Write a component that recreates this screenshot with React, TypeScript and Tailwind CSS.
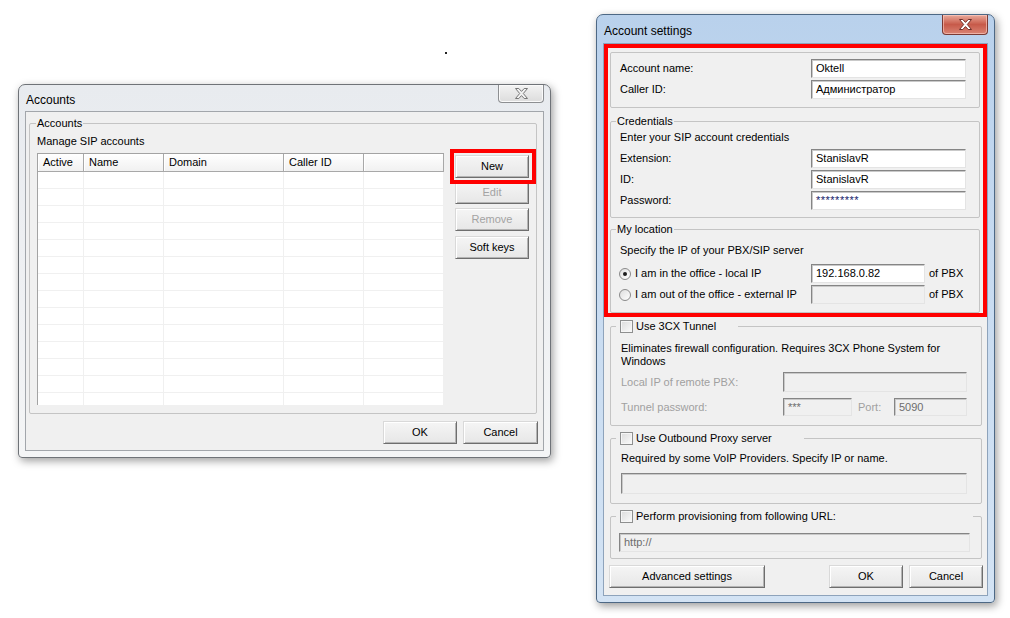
import React from 'react';

type P = { children?: React.ReactNode; className?: string };

function Btn({ children, className = '', disabled = false }: P & { disabled?: boolean }) {
  return (
    <div
      className={`flex items-center justify-center h-[23px] border border-t-[#d9d9d9] border-l-[#d9d9d9] border-r-[#6e6e6e] border-b-[#6e6e6e] bg-linear-to-b from-[#f5f5f5] to-[#e7e7e7] shadow-[inset_1px_1px_0_#ffffff,inset_-1px_-1px_0_#b4b4b4] ${disabled ? 'text-[#a3a3a3]' : 'text-black'} ${className}`}
    >
      {children}
    </div>
  );
}

function Input({ children, className = '', disabled = false }: P & { disabled?: boolean }) {
  return (
    <div
      className={`flex items-center pl-[4px] border border-t-[#858585] border-l-[#858585] border-r-[#e4e4e4] border-b-[#e4e4e4] shadow-[inset_1px_1px_0_#c9c9c9] whitespace-nowrap overflow-hidden ${disabled ? 'bg-[#f0f0f0] text-[#6d6d6d]' : 'bg-white text-black'} ${className}`}
    >
      {children}
    </div>
  );
}

function Check() {
  return (
    <span className="inline-block w-[13px] h-[13px] border border-[#8e8f8f] bg-linear-to-br from-[#dcdcdc] to-[#fbfbfb] shadow-[inset_0_0_0_1px_#f6f6f6] shrink-0" />
  );
}

function Radio({ checked = false }: { checked?: boolean }) {
  return (
    <span className="flex items-center justify-center w-[12px] h-[12px] rounded-full border border-[#8a8a8a] bg-linear-to-br from-[#dedede] to-[#ffffff] shrink-0">
      {checked && <span className="w-[4px] h-[4px] rounded-full bg-[#1c1c1c]" />}
    </span>
  );
}

function XIcon({ fill, stroke }: { fill: string; stroke: string }) {
  return (
    <svg width="13" height="11" viewBox="0 0 13 11">
      <polygon
        points="0.5,0.5 3.8,0.5 6.5,3.4 9.2,0.5 12.5,0.5 8.3,5.5 12.5,10.5 9.2,10.5 6.5,7.6 3.8,10.5 0.5,10.5 4.7,5.5"
        fill={fill}
        stroke={stroke}
        strokeWidth="1"
        strokeLinejoin="round"
      />
    </svg>
  );
}

const cols = [46, 80, 120, 80, 80];
const heads = ['Active', 'Name', 'Domain', 'Caller ID', ''];

function AccountsWindow() {
  return (
    <div className="absolute left-[18px] top-[84px] w-[533px] h-[374px] flex flex-col rounded-t-[7px] rounded-b-[4px] border border-[#6f7378] bg-linear-to-b from-[#e8ebef] to-[#f4f5f6] shadow-[2px_3px_8px_rgba(0,0,0,0.38)] px-[6px] pb-[6px]">
      <div className="flex justify-between items-start h-[26px] shrink-0">
        <span className="pt-[8px] pl-[1px] text-[12px] leading-[14px] text-black">Accounts</span>
        <div className="flex items-center justify-center w-[46px] h-[18px] rounded-b-[4px] border border-t-0 border-[#8d8f92] bg-linear-to-b from-[#f3f3f3] to-[#dcdcdc] shadow-[inset_0_0_0_1px_#fafafa]">
          <XIcon fill="#f2f2f2" stroke="#767676" />
        </div>
      </div>
      <div className="flex-1 flex flex-col border border-[#a2a6ab] bg-[#f0f0f0]">
        <fieldset className="ml-[3px] mr-[6px] mt-[5px] border border-[#c4c4c4] rounded-[2px]">
          <legend className="ml-[6px] px-[1px] leading-[13px]">Accounts</legend>
          <div className="pl-[7px] pb-[8px]">
            <div className="pt-[5px] leading-[13px]">Manage SIP accounts</div>
            <div className="flex mt-[5px]">
              <div className="w-[407px] h-[252px] bg-white border-l border-t border-[#a3a3a3] overflow-hidden">
                <div className="flex h-[18px]">
                  {heads.map((h, i) => (
                    <div
                      key={i}
                      style={{ width: cols[i] }}
                      className="flex items-center pl-[5px] bg-linear-to-b from-[#ffffff] to-[#f1f1f1] border-r border-b border-[#a8a8a8] shadow-[inset_1px_1px_0_#ffffff]"
                    >
                      {h}
                    </div>
                  ))}
                </div>
                {Array.from({ length: 14 }).map((_, r) => (
                  <div key={r} className="flex h-[17px] border-b border-[#f0f0f0]">
                    {cols.map((w, i) => (
                      <div key={i} style={{ width: w }} className="border-r border-[#f0f0f0]" />
                    ))}
                  </div>
                ))}
              </div>
              <div className="ml-[11px] pt-[2px] flex flex-col w-[74px]">
                <div className="relative">
                  <Btn>New</Btn>
                  <span className="absolute left-[-5px] top-[-6px] right-[-7px] bottom-[-6px] border-4 border-[#ff0000]" />
                </div>
                <Btn disabled className="mt-[3px]">Edit</Btn>
                <Btn disabled className="mt-[4px]">Remove</Btn>
                <Btn className="mt-[5px]">Soft keys</Btn>
              </div>
            </div>
          </div>
        </fieldset>
        <div className="flex justify-end gap-[6px] pr-[5px] mt-[7px]">
          <Btn className="w-[74px]">OK</Btn>
          <Btn className="w-[75px]">Cancel</Btn>
        </div>
      </div>
    </div>
  );
}

function Row({ label, children }: { label: string; children: React.ReactNode }) {
  return (
    <div className="flex items-center justify-between h-[19px]">
      <span>{label}</span>
      {children}
    </div>
  );
}

function SettingsWindow() {
  return (
    <div className="absolute left-[596px] top-[14px] w-[399px] h-[589px] flex flex-col rounded-t-[7px] rounded-b-[4px] border border-[#4d6885] bg-linear-to-b from-[#b9d1ec] via-[#c9dcf1] to-[#d3e3f4] shadow-[2px_3px_8px_rgba(0,0,0,0.4)] px-[6px] pb-[6px]">
      <div className="flex justify-between items-start h-[28px] shrink-0">
        <span className="pt-[9px] pl-[1px] text-[12px] leading-[14px] text-black">Account settings</span>
        <div className="flex items-center justify-center w-[46px] h-[20px] rounded-b-[4px] border border-t-0 border-[#7a3a34] bg-linear-to-b from-[#e9a99b] via-[#c75a4a] to-[#d98373] shadow-[inset_0_0_0_1px_rgba(255,210,200,0.6)]">
          <XIcon fill="#ffffff" stroke="#6e2e28" />
        </div>
      </div>
      <div className="flex-1 flex flex-col border border-[#8ea3bb] bg-[#f0f0f0]">
        {/* highlighted block */}
        <div className="border-4 border-[#ff0000] pl-[2px] pr-[3px] pt-[4px]">
          <div className="h-[56px] border border-[#c4c4c4] rounded-[2px] pt-[6px] pl-[9px] pr-[13px] flex flex-col gap-[2px]">
            <Row label="Account name:">
              <Input className="w-[155px] h-[19px]">Oktell</Input>
            </Row>
            <Row label="Caller ID:">
              <Input className="w-[155px] h-[19px]">Администратор</Input>
            </Row>
          </div>
          <fieldset className="mt-[7px] border border-[#c4c4c4] rounded-[2px]">
            <legend className="ml-[5px] px-[1px] leading-[13px]">Credentials</legend>
            <div className="pl-[9px] pr-[13px] pb-[7px]">
              <div className="pt-[3px] leading-[13px]">Enter your SIP account credentials</div>
              <div className="mt-[5px] flex flex-col gap-[2px]">
                <Row label="Extension:">
                  <Input className="w-[155px] h-[19px]">StanislavR</Input>
                </Row>
                <Row label="ID:">
                  <Input className="w-[155px] h-[19px]">StanislavR</Input>
                </Row>
                <Row label="Password:">
                  <Input className="w-[155px] h-[19px]">
                    <span className="text-[#14206a] tracking-[0.5px]">*********</span>
                  </Input>
                </Row>
              </div>
            </div>
          </fieldset>
          <fieldset className="mt-[5px] border border-[#c4c4c4] rounded-[2px]">
            <legend className="ml-[5px] px-[1px] leading-[13px]">My location</legend>
            <div className="pl-[8px] pb-[8px]">
              <div className="pt-[8px] pl-[1px] leading-[13px]">Specify the IP of your PBX/SIP server</div>
              <div className="mt-[7px] flex flex-col gap-[2px]">
                <div className="flex items-center h-[19px]">
                  <div className="w-[192px] flex items-center">
                    <Radio checked />
                    <span className="ml-[4px]">I am in the office - local IP</span>
                  </div>
                  <Input className="w-[114px] h-[19px]">192.168.0.82</Input>
                  <span className="ml-[4px]">of PBX</span>
                </div>
                <div className="flex items-center h-[19px]">
                  <div className="w-[192px] flex items-center">
                    <Radio />
                    <span className="ml-[4px]">I am out of the office - external IP</span>
                  </div>
                  <Input disabled className="w-[114px] h-[19px]" />
                  <span className="ml-[4px]">of PBX</span>
                </div>
              </div>
            </div>
          </fieldset>
        </div>

        {/* 3CX tunnel */}
        <fieldset className="mt-[3px] ml-[6px] mr-[5px] border border-[#c4c4c4] rounded-[2px]">
          <legend className="ml-[5px] w-[122px] pl-[4px] flex items-center h-[13px]">
            <Check />
            <span className="ml-[3px] leading-[13px]">Use 3CX Tunnel</span>
          </legend>
          <div className="pl-[10px] pb-[9px]">
            <div className="pt-[9px] leading-[13px] pr-[20px]">
              Eliminates firewall configuration. Requires 3CX Phone System for Windows
            </div>
            <div className="flex items-center h-[20px] mt-[4px]">
              <span className="w-[162px] text-[#a0a0a0]">Local IP of remote PBX:</span>
              <Input disabled className="w-[184px] h-[20px]" />
            </div>
            <div className="flex items-center h-[18px] mt-[6px]">
              <span className="w-[162px] text-[#a0a0a0]">Tunnel password:</span>
              <Input disabled className="w-[69px] h-[18px]">***</Input>
              <span className="ml-[6px] w-[36px] text-[#a0a0a0]">Port:</span>
              <Input disabled className="w-[73px] h-[18px]">5090</Input>
            </div>
          </div>
        </fieldset>

        {/* Outbound proxy */}
        <fieldset className="mt-[6px] ml-[6px] mr-[5px] border border-[#c4c4c4] rounded-[2px]">
          <legend className="ml-[5px] w-[188px] pl-[4px] flex items-center h-[13px]">
            <Check />
            <span className="ml-[3px] leading-[13px]">Use Outbound Proxy server</span>
          </legend>
          <div className="pl-[10px] pr-[14px] pb-[9px]">
            <div className="pt-[7px] leading-[13px]">Required by some VoIP Providers. Specify IP or name.</div>
            <Input disabled className="mt-[8px] h-[21px]" />
          </div>
        </fieldset>

        {/* Provisioning */}
        <fieldset className="mt-[6px] ml-[6px] mr-[5px] border border-[#c4c4c4] rounded-[2px]">
          <legend className="ml-[5px] w-[357px] pl-[4px] flex items-center h-[13px]">
            <Check />
            <span className="ml-[3px] leading-[13px]">Perform provisioning from following URL:</span>
          </legend>
          <div className="pl-[8px] pr-[11px] pb-[6px]">
            <Input disabled className="mt-[10px] h-[19px]">http://</Input>
          </div>
        </fieldset>

        <div className="flex items-center mt-[6px] pl-[5px] pr-[4px]">
          <Btn className="w-[156px]">Advanced settings</Btn>
          <div className="flex-1" />
          <Btn className="w-[74px]">OK</Btn>
          <Btn className="w-[74px] ml-[6px]">Cancel</Btn>
        </div>
      </div>
    </div>
  );
}

export default function App() {
  return (
    <div className="relative w-[1010px] h-[618px] bg-white overflow-hidden font-['Liberation_Sans',Arial,sans-serif] text-[11px] leading-[13px] text-black">
      <span className="absolute left-[445px] top-[52px] w-[2px] h-[2px] bg-[#222]" />
      <AccountsWindow />
      <SettingsWindow />
    </div>
  );
}
